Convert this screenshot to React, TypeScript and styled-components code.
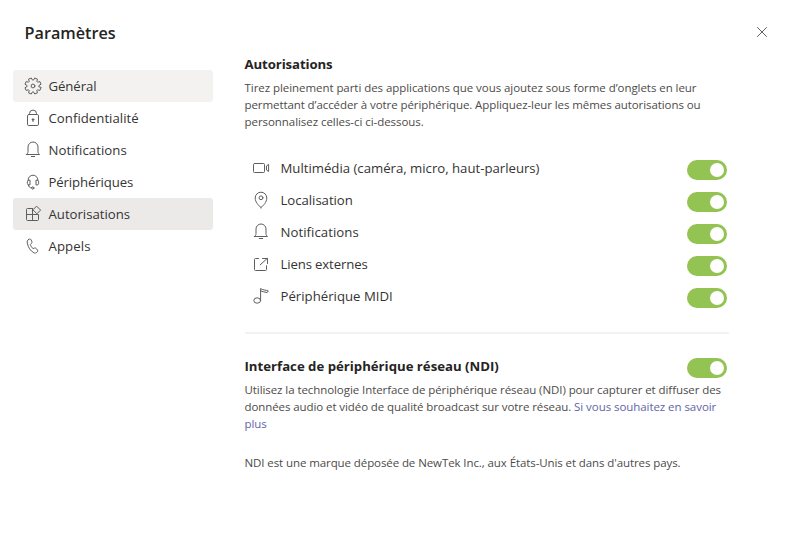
import React from "react";
import styled, { createGlobalStyle } from "styled-components";

const GlobalStyle = createGlobalStyle`
  * { box-sizing: border-box; }
  body {
    margin: 0;
    background: #fff;
    color: #252423;
    font-family: "Open Sans", "Noto Sans", sans-serif;
  }
`;

const Dialog = styled.main`
  display: flex;
  flex-direction: column;
  width: 787px;
  height: 549px;
  overflow: hidden;
  background: #fff;
`;

const Header = styled.header`
  display: flex;
  justify-content: space-between;
  align-items: center;
  height: 44px;
  padding: 22px 15px 0 24.6px;
`;

const Title = styled.h1`
  margin: 0;
  font-size: 16.2px;
  line-height: 22px;
  font-weight: 600;
  letter-spacing: -0.01px;
`;

const CloseButton = styled.button`
  display: flex;
  padding: 0;
  border: 0;
  margin-top: -2px;
  background: none;
  color: #484644;
`;

const Columns = styled.div`
  display: flex;
  align-items: flex-start;
  padding-left: 13px;
`;

const Sidebar = styled.nav`
  display: flex;
  flex-direction: column;
  width: 200px;
  margin: 26px 31.5px 0 0;
`;

const NavItem = styled.a<{ $fill?: string }>`
  display: flex;
  align-items: center;
  gap: 5.5px;
  height: 32px;
  padding-left: 10px;
  border-radius: 3px;
  background: ${(p) => p.$fill ?? "transparent"};
`;

const Glyph = styled.svg`
  flex: none;
  width: 20px;
  height: 20px;
  fill: none;
  stroke: #605e5c;
  stroke-width: 1;
  stroke-linejoin: round;
  stroke-linecap: round;
`;

const Label = styled.span<{ $track?: number }>`
  font-size: 13.2px;
  line-height: 20px;
  color: #363432;
  letter-spacing: ${(p) => p.$track ?? 0}px;
  white-space: nowrap;
`;

const Content = styled.section`
  display: flex;
  flex-direction: column;
  width: 484px;
  padding-top: 10px;
`;

const Heading = styled.h2<{ $track: number }>`
  margin: 0;
  font-size: 13.2px;
  line-height: 20px;
  font-weight: 700;
  letter-spacing: ${(p) => p.$track}px;
`;

const Description = styled.p`
  margin: 5px 0 0;
  font-size: 11.5px;
  line-height: 17px;
  color: #4d4b49;
`;

const Line = styled.span<{ $track: number }>`
  display: block;
  letter-spacing: ${(p) => p.$track}px;
  white-space: nowrap;
`;

const Link = styled.a<{ $track: number }>`
  color: #6264a7;
  letter-spacing: ${(p) => p.$track}px;
`;

const PermissionList = styled.div`
  display: flex;
  flex-direction: column;
  margin-top: 22px;
`;

const PermissionRow = styled.div`
  display: flex;
  align-items: center;
  gap: 9.5px;
  height: 32px;
  padding: 0 1.5px 0 6.5px;
`;

const Switch = styled.button`
  display: flex;
  flex: none;
  justify-content: flex-end;
  align-items: center;
  width: 40px;
  height: 20px;
  margin: 4px 0 0 auto;
  padding: 0 2.7px;
  border: 0;
  border-radius: 10px;
  background: #92c353;
`;

const Knob = styled.span`
  width: 14.4px;
  height: 14.4px;
  border-radius: 50%;
  background: #fff;
`;

const Divider = styled.hr`
  width: 100%;
  height: 2px;
  margin: 20px 0 22px;
  border: 0;
  background: #f3f2f1;
`;

const SectionHeader = styled.div`
  display: flex;
  align-items: center;
  height: 20px;
  padding-right: 1.5px;
`;

const Note = styled(Description)`
  margin-top: 22px;
`;

const gearPath = (() => {
  const points: string[] = [];
  for (let i = 0; i < 8; i++) {
    const center = (i + 0.5) * 45;
    [
      [-10, 8.2],
      [10, 8.2],
      [18, 5.9],
      [27, 5.9],
    ].forEach(([offset, radius]) => {
      const angle = ((center + offset) * Math.PI) / 180;
      points.push(
        `${(10 + radius * Math.cos(angle)).toFixed(2)} ${(10 + radius * Math.sin(angle)).toFixed(2)}`
      );
    });
  }
  return `M${points.join("L")}Z`;
})();

const GearIcon = () => (
  <Glyph viewBox="0 0 20 20">
    <path d={gearPath} />
    <circle cx="10" cy="10" r="1.9" />
  </Glyph>
);

const LockIcon = () => (
  <Glyph viewBox="0 0 20 20">
    <rect x="4.5" y="6.5" width="11" height="11" rx="1.3" />
    <path d="M6.5 6.5V5.6a3.5 3.5 0 0 1 7 0v.9M10 12v1.5" />
    <circle cx="10" cy="11.5" r=".8" fill="#605e5c" />
  </Glyph>
);

const BellIcon = () => (
  <Glyph viewBox="0 0 20 20">
    <path d="M3.5 14.5h13c-1-.8-1.5-1.7-1.5-2.8V7A5 5 0 0 0 5 7v4.7c0 1.1-.5 2-1.5 2.8Z" />
    <path d="M8.3 16.5h3.4" />
  </Glyph>
);

const HeadsetIcon = () => (
  <Glyph viewBox="0 0 20 20">
    <path d="M5.2 8.3V8a4.8 4.8 0 0 1 9.6 0v.3" />
    <path d="M6.6 8.2H5.8c-.9 0-1.4.6-1.4 1.4v1.9c0 .8.5 1.4 1.4 1.4h.8ZM13.4 8.2h.8c.9 0 1.4.6 1.4 1.4v1.9c0 .8-.5 1.4-1.4 1.4h-.8Z" />
    <path d="M5.4 13c.2 1.8 1.3 2.8 3.2 2.9" />
    <circle cx="9.8" cy="16" r="1.1" />
  </Glyph>
);

const AppsIcon = () => (
  <Glyph viewBox="0 0 20 20">
    <path d="M9.5 4.5h-5a1 1 0 0 0-1 1v10a1 1 0 0 0 1 1h10a1 1 0 0 0 1-1v-5h-12M9.5 4.5v12" />
    <path d="m13.9 2.4 3.7 3.7-3.7 3.7-3.7-3.7Z" />
  </Glyph>
);

const PhoneIcon = () => (
  <Glyph viewBox="0 0 20 20">
    <path d="m5.5 3.5 1-.4c.7-.2 1.3 0 1.6.7l.8 2c.2.6.1 1.1-.3 1.5L7.4 8.5c.4 1.7 1.4 3.1 2.7 4.1l1.6-.6c.6-.2 1.1 0 1.5.5l1.3 1.6c.4.6.4 1.2-.1 1.7l-.6.6c-.8.7-1.9.9-2.9.4-3.6-2-5.7-5.3-6.6-9.7-.3-1.6 0-3 1.2-3.6Z" />
  </Glyph>
);

const CameraIcon = () => (
  <Glyph viewBox="0 0 20 20">
    <rect x="2.5" y="5.5" width="11" height="9" rx="1" />
    <path d="M17.6 6.7v6.8L15.5 12V8.3Z" />
  </Glyph>
);

const PinIcon = () => (
  <Glyph viewBox="0 0 20 20">
    <path d="M10 17.6C7.4 15.2 4.2 12.1 4.2 8a5.8 5.8 0 0 1 11.6 0c0 4.1-3.2 7.2-5.8 9.6Z" />
    <circle cx="10" cy="7.8" r="1.9" />
  </Glyph>
);

const ExternalIcon = () => (
  <Glyph viewBox="0 0 20 20">
    <path d="M7.5 4.5h-3a1 1 0 0 0-1 1v10a1 1 0 0 0 1 1h10a1 1 0 0 0 1-1v-3.7M9.2 10.8l7-6.3M11.5 4.5h5v5" />
  </Glyph>
);

const NoteIcon = () => (
  <Glyph viewBox="0 0 20 20">
    <ellipse cx="6.2" cy="14.5" rx="3.4" ry="2.7" />
    <path d="M9.6 14.5V2.5c2 1.7 5 1.4 7.7 2.4l-1.2 1.7c-2.3-.8-4.5-.7-6.5-1.6" />
  </Glyph>
);

const CloseIcon = () => (
  <Glyph viewBox="0 0 20 20">
    <path d="m5.5 5.5 9 9m0-9-9 9" />
  </Glyph>
);

const navigation = [
  { label: "Général", Icon: GearIcon, track: -0.08, fill: "#f3f2f1" },
  { label: "Confidentialité", Icon: LockIcon, track: 0.03 },
  { label: "Notifications", Icon: BellIcon, track: 0.05 },
  { label: "Périphériques", Icon: HeadsetIcon, track: -0.12 },
  { label: "Autorisations", Icon: AppsIcon, track: -0.02, fill: "#ebeae9" },
  { label: "Appels", Icon: PhoneIcon, track: 0.1 },
];

const permissions = [
  { label: "Multimédia (caméra, micro, haut-parleurs)", Icon: CameraIcon, track: -0.01 },
  { label: "Localisation", Icon: PinIcon, track: -0.04 },
  { label: "Notifications", Icon: BellIcon, track: 0.05 },
  { label: "Liens externes", Icon: ExternalIcon, track: -0.14 },
  { label: "Périphérique MIDI", Icon: NoteIcon, track: 0.01 },
];

const Toggle = ({ label }: { label: string }) => (
  <Switch role="switch" aria-checked="true" aria-label={label}>
    <Knob />
  </Switch>
);

export default function App() {
  return (
    <Dialog>
      <GlobalStyle />
      <Header>
        <Title>Paramètres</Title>
        <CloseButton aria-label="Fermer">
          <CloseIcon />
        </CloseButton>
      </Header>
      <Columns>
        <Sidebar>
          {navigation.map(({ label, Icon, track, fill }) => (
            <NavItem key={label} $fill={fill}>
              <Icon />
              <Label $track={track}>{label}</Label>
            </NavItem>
          ))}
        </Sidebar>
        <Content>
          <Heading $track={-0.1}>Autorisations</Heading>
          <Description>
            <Line $track={-0.055}>
              Tirez pleinement parti des applications que vous ajoutez sous forme d’onglets en leur
            </Line>
            <Line $track={-0.082}>
              permettant d’accéder à votre périphérique. Appliquez-leur les mêmes autorisations ou
            </Line>
            <Line $track={-0.055}>personnalisez celles-ci ci-dessous.</Line>
          </Description>
          <PermissionList>
            {permissions.map(({ label, Icon, track }) => (
              <PermissionRow key={label}>
                <Icon />
                <Label $track={track}>{label}</Label>
                <Toggle label={label} />
              </PermissionRow>
            ))}
          </PermissionList>
          <Divider />
          <SectionHeader>
            <Heading $track={0}>Interface de périphérique réseau (NDI)</Heading>
            <Toggle label="NDI" />
          </SectionHeader>
          <Description>
            <Line $track={-0.074}>
              Utilisez la technologie Interface de périphérique réseau (NDI) pour capturer et diffuser des
            </Line>
            <Line $track={-0.085}>
              données audio et vidéo de qualité broadcast sur votre réseau.{" "}
              <Link $track={-0.06}>Si vous souhaitez en savoir</Link>
            </Line>
            <Line $track={-0.1}>
              <Link $track={-0.1}>plus</Link>
            </Line>
          </Description>
          <Note>
            <Line $track={-0.091}>
              NDI est une marque déposée de NewTek Inc., aux États-Unis et dans d'autres pays.
            </Line>
          </Note>
        </Content>
      </Columns>
    </Dialog>
  );
}
